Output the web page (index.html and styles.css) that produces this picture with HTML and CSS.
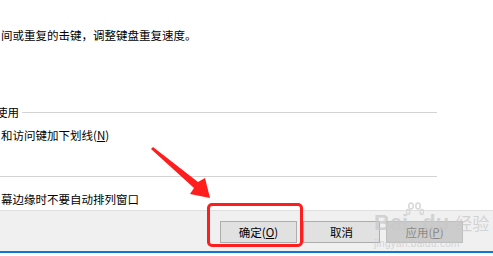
FILE: index.html
```html
<!DOCTYPE html>
<html lang="zh-CN">
<head>
  <meta charset="UTF-8">
  <title>键盘设置</title>
  <link rel="stylesheet" href="styles.css">
</head>
<body>
  <div class="dialog">
    <div class="panel">
      <p class="desc">间或重复的击键，调整键盘重复速度。</p>
      <div class="legend">
        <span class="legend-text">使用</span>
        <span class="rule"></span>
      </div>
      <p class="option">和访问键加下划线(<u>N</u>)</p>
      <div class="divider"></div>
      <p class="option last">幕边缘时不要自动排列窗口</p>
    </div>

    <div class="footer">
      <button class="btn">确定(<u>O</u>)</button>
      <button class="btn">取消</button>
      <button class="btn disabled">应用(<u>P</u>)</button>
    </div>

    <!-- watermark -->
    <div class="watermark">
      <div class="wm-logo">
        <span>Bai</span>
        <svg class="paw" width="18" height="20" viewBox="0 0 18 20">
          <g fill="none" stroke="#d8d8d8" stroke-width="1.6">
            <ellipse cx="5" cy="4" rx="2.2" ry="3"/>
            <ellipse cx="12" cy="4" rx="2.2" ry="3"/>
            <ellipse cx="2" cy="10" rx="1.8" ry="2.4"/>
            <ellipse cx="16" cy="10" rx="1.8" ry="2.4"/>
          </g>
        </svg>
        <span>du</span>
        <span class="wm-cn">经验</span>
      </div>
      <div class="wm-url">jingyan.baidu.com</div>
    </div>

    <!-- annotation -->
    <div class="highlight"></div>
    <svg class="arrow" width="493" height="256" viewBox="0 0 493 256">
      <polygon fill="#fe1e1e" points="153,147 198,182 205,178 210,198 190,194 194,188 151,149"/>
    </svg>
  </div>
</body>
</html>
```

FILE: styles.css
```css
/* General Styles */
body {
  margin: 0;
  padding: 0;
  font-family: "Noto Sans CJK SC", "Noto Sans", sans-serif;
  font-size: 11.5px;
  color: #000;
  background: #fff;
}

.dialog {
  position: relative;
  width: 493px;
  height: 256px;
  overflow: hidden;
}

.panel {
  height: 210px;
  padding-right: 56px;
  overflow: hidden;
}

.desc,
.option {
  margin: 0;
  line-height: 16px;
  padding-left: 1px;
  white-space: nowrap;
}

.desc {
  margin-top: 27px;
}

.legend {
  display: flex;
  align-items: center;
  height: 16px;
  margin-top: 61px;
  margin-left: -4px;
}

.legend-text {
  line-height: 16px;
  padding-right: 3px;
}

.legend .rule {
  flex: 1;
  height: 1px;
  background: #d3d3d3;
}

.option {
  margin-top: 7px;
}

.divider {
  height: 1px;
  margin-top: 33px;
  background: #d3d3d3;
}

.option.last {
  margin-top: 14px;
}

.footer {
  display: flex;
  gap: 6px;
  height: 43px;
  padding: 10px 0 0 220px;
  box-sizing: border-box;
  background: #f0f0f0;
  border-top: 1px solid #dfdfdf;
  border-bottom: 2px solid #0a78d4;
}

.btn {
  width: 77px;
  height: 22px;
  padding: 0;
  font-family: inherit;
  font-size: 11.5px;
  color: #000;
  background: #e1e1e1;
  border: 1px solid #adadad;
}

.btn.disabled {
  color: #8a8a8a;
  background: #cccccc;
  border-color: #bfbfbf;
}

/* Baidu watermark */
.watermark {
  position: absolute;
  left: 374px;
  top: 202px;
  color: rgba(200, 200, 200, 0.75);
  pointer-events: none;
}

.wm-logo {
  display: flex;
  align-items: flex-end;
  height: 34px;
  font-family: "Liberation Sans", Arial, sans-serif;
  font-size: 22px;
  font-weight: bold;
  line-height: 26px;
}

.paw {
  margin: 0 -2px 14px;
}

.wm-cn {
  margin-left: 6px;
  font-family: "Noto Sans CJK SC", sans-serif;
  font-size: 17px;
  font-weight: normal;
}

.wm-url {
  margin-top: 2px;
  font-family: "Liberation Sans", Arial, sans-serif;
  font-size: 10px;
  line-height: 12px;
  letter-spacing: 0.3px;
}

/* red annotation */
.highlight {
  position: absolute;
  left: 207px;
  top: 203px;
  width: 96px;
  height: 44px;
  box-sizing: border-box;
  border: 3px solid #fe1e1e;
  border-radius: 5px;
}

.arrow {
  position: absolute;
  left: 0;
  top: 0;
}
```
